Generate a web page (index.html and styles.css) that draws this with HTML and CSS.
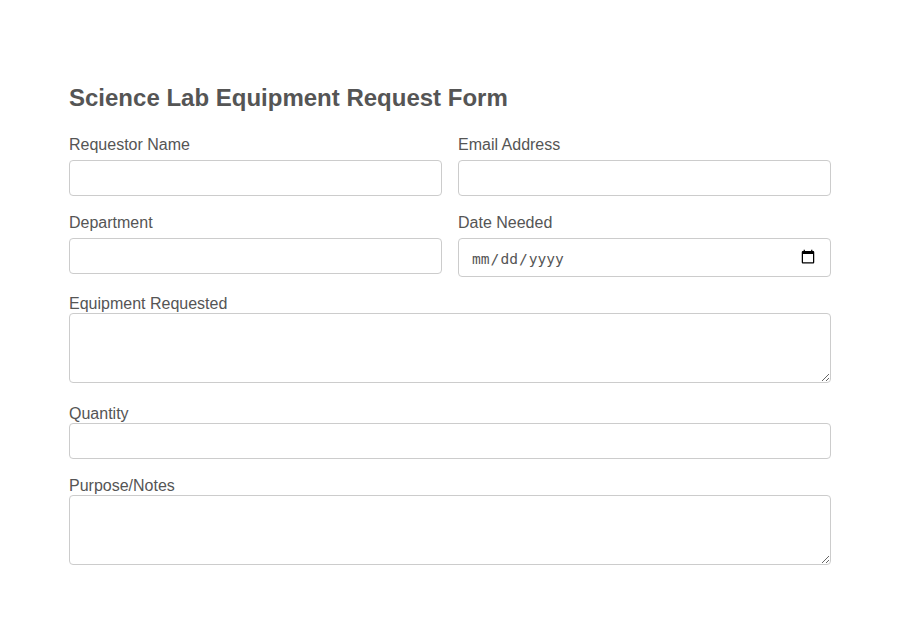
FILE: index.html
```html
<!DOCTYPE html>
<html lang="en">
<head>
    <meta charset="UTF-8">
    <meta name="viewport" content="width=device-width, initial-scale=1.0">
    <title>Science Lab Equipment Request Form</title>
    <link rel="stylesheet" href="styles.css">
</head>
<body>
    <form class="request-form">
        <h2>Science Lab Equipment Request Form</h2>
        <div class="form-grid">
            <div class="form-field">
                <label for="name">Requestor Name</label>
                <input type="text" id="name" name="name">
            </div>
            <div class="form-field">
                <label for="email">Email Address</label>
                <input type="email" id="email" name="email">
            </div>
            <div class="form-field">
                <label for="department">Department</label>
                <input type="text" id="department" name="department">
            </div>
            <div class="form-field">
                <label for="date">Date Needed</label>
                <input type="date" id="date" name="date">
            </div>
        </div>
        <div class="form-row">
            <label for="equipment">Equipment Requested</label>
            <textarea id="equipment" name="equipment"></textarea>
        </div>
        <div class="form-row">
            <label for="quantity">Quantity</label>
            <input type="number" id="quantity" name="quantity">
        </div>
        <div class="form-row">
            <label for="notes">Purpose/Notes</label>
            <textarea id="notes" name="notes"></textarea>
        </div>
    </form>
</body>
</html>
```

FILE: styles.css
```css
body {
    font-family: "Liberation Sans", Arial, sans-serif;
    font-size: 16px;
    margin: 0;
    padding: 0;
    background-color: #fff;
    color: #555;
}
.request-form {
    width: 762px;
    margin: 0 auto;
    padding-top: 84px;
}
h2 {
    margin: 0 0 25px;
    font-size: 24px;
    line-height: 27px;
}
.form-grid {
    display: grid;
    grid-template-columns: 1fr 1fr;
    gap: 18px 16px;
    margin-bottom: 18px;
}
.form-field {
    display: flex;
    flex-direction: column;
}
label {
    display: block;
    line-height: 18px;
}
.form-field label {
    margin-bottom: 6px;
}
input,
textarea {
    display: block;
    box-sizing: border-box;
    width: 100%;
    height: 36px;
    padding: 8px 12px;
    border: 1px solid #ccc;
    border-radius: 4px;
    background-color: #fff;
    color: #555;
    font-size: 16px;
}
input[type="date"] {
    height: 39px;
    font-size: 14.6px;
}
input::-webkit-datetime-edit {
    padding-top: 1px;
    padding-bottom: 0;
}
input::-webkit-calendar-picker-indicator {
    width: 16px;
    height: 16px;
    padding: 0;
    margin-right: 2px;
    margin-bottom: 2px;
}
textarea {
    height: 70px;
    margin-bottom: 22px;
    resize: vertical;
}
.form-row {
    margin-bottom: 18px;
}
.form-row:has(textarea) {
    margin-bottom: 0;
}
```
